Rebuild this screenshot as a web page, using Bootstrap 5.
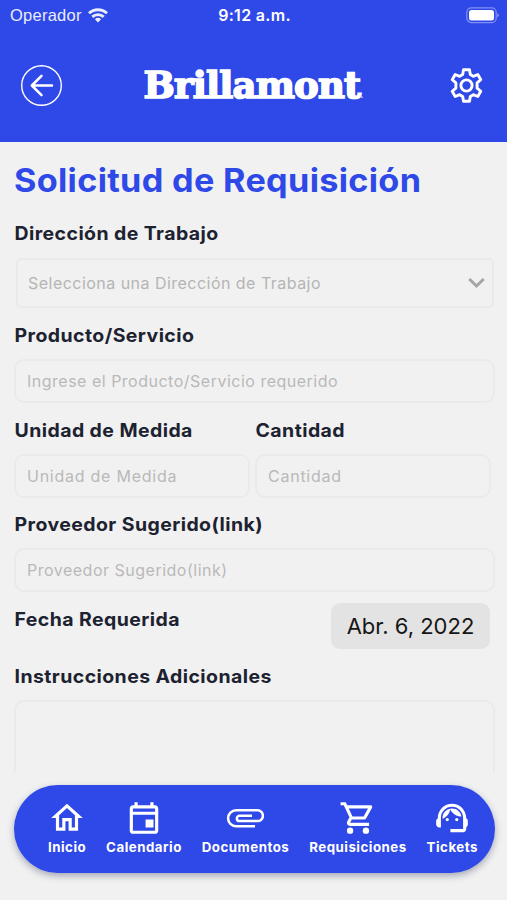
<!DOCTYPE html>
<html lang="es">
<head>
<meta charset="utf-8">
<meta name="viewport" content="width=device-width, initial-scale=1">
<title>Solicitud de Requisición</title>
<link href="https://cdn.jsdelivr.net/npm/bootstrap@5.3.0/dist/css/bootstrap.min.css" rel="stylesheet">
<style>
:root{--brand:#2f48e8}
body{background:#f1f1f1;font-family:Inter,"Open Sans",sans-serif;color:#1d2230}
.screen{height:900px;overflow:hidden}
.app-top{height:142px;background:var(--brand)}
.status{height:30px;padding:0 8px 0 10px;font-size:16px;line-height:30px}
.status>*{flex:1 1 0}
.carrier{font-family:"Liberation Sans",sans-serif;font-size:16.500px;letter-spacing:.25px;opacity:.9}
.clock{font-weight:600;letter-spacing:.3px}
.brand-row{height:110px;padding:0 23px 0 21px}
.brand-name{font:bold 37px/48px "DejaVu Serif",serif;letter-spacing:-.8px;-webkit-text-stroke:1.700px #fff;padding:9px 4px 0 0}
.brand-name small{font-size:9px;letter-spacing:0;-webkit-text-stroke:0;opacity:.7}
.form-area{height:630px;padding:19px 12px 0 14px}
.page-title{font-size:32.5px;line-height:40px;font-weight:700;letter-spacing:.3px;color:var(--brand);margin-bottom:20px;transform:scaleX(1.053);transform-origin:0 0}
.field-label{display:block;font-size:18.5px;line-height:24px;font-weight:700;letter-spacing:.4px;padding-left:.5px;white-space:nowrap;transform:scaleX(1.053);transform-origin:0 0}
.form-area .form-control{background-color:transparent;border:2px solid #eaeaeb;border-radius:10px;height:44px;padding:0 11px;font-size:16px;letter-spacing:.5px;color:#b9b9b9}
.form-area .form-control::placeholder{color:#b9b9b9;opacity:1}
.form-area .half-a .form-control{letter-spacing:.75px}
.pick{height:50px;margin:0 1px 0 2px;border:2px solid #eaeaeb;border-radius:5px;padding:0 7px 0 10px;color:#b5b5b5;font-size:16px;letter-spacing:.47px}
.half-a{width:236px}
.date-chip{width:159px;height:46px;margin-right:5px;border-radius:9px;background:#e3e3e3;color:#161616;font-size:22px}
.form-area textarea.form-control{height:140px;resize:none}
.tabs{height:88px;margin:13px 12px 0 14px;border-radius:44px;background:var(--brand);padding:14px 17px 0 34px;box-shadow:0 3px 7px rgba(40,50,90,.38)}
.tab-item{font-size:13.3px;line-height:20px;font-weight:700;letter-spacing:.5px}
.tab-item svg{height:38px;display:block}
</style>
</head>
<body>
<div class="screen">
<header class="app-top text-white">
  <div class="status d-flex align-items-center">
    <div class="carrier d-flex align-items-center"><span>Operador</span>
      <svg style="margin-left:6px" width="20" height="15" viewBox="0 0 20 15" fill="none" stroke="#fff" stroke-width="2.9"><path d="M1 5.3a13 13 0 0 1 18 0M4.3 8.9a8.3 8.3 0 0 1 11.4 0"/><path d="M10 14.5l-3.1-3.2a4.5 4.5 0 0 1 6.200 0z" fill="#fff" stroke="none"/></svg>
    </div>
    <div class="clock text-center text-nowrap">9:12 a.m.</div>
    <div class="d-flex justify-content-end">
      <svg width="33" height="17" viewBox="0 0 33 17"><rect x=".8" y=".8" width="29.4" height="14.800" rx="4.5" fill="none" stroke="#fff" stroke-opacity=".4" stroke-width="1.2"/><rect x="3" y="3" width="25" height="10.5" rx="2.5" fill="#fff"/><path d="M31.4 6v4.5q1.4-.6 1.4-2.2T31.4 6z" fill="#fff" fill-opacity=".45"/></svg>
    </div>
  </div>
  <div class="brand-row d-flex align-items-center justify-content-between">
    <svg width="41" height="41" viewBox="0 0 41 41" fill="none" stroke="#fff"><circle cx="20.5" cy="20.5" r="19.8" stroke-width="1.4"/><path d="M31 20.500H11M20.5 10.800L10.800 20.500l9.700 9.700" stroke-width="2.5" stroke-linecap="round" stroke-linejoin="round"/></svg>
    <div class="brand-name text-nowrap">Brillamont<small>.</small></div>
    <svg width="35" height="35" viewBox="0 0 35 35" fill="none" stroke="#fff" stroke-width="2.9" stroke-linejoin="round"><path d="M14.500 1.800h6l.800 4.800 3 1.700 4.500-1.800 3 5.200-3.700 3.100v5.400l3.700 3.100-3 5.200-4.500-1.800-3 1.700-.800 4.800h-6l-.800-4.800-3-1.700-4.500 1.800-3-5.200 3.700-3.100v-5.400l-3.700-3.100 3-5.200 4.500 1.800 3-1.700z"/><circle cx="17.5" cy="17.5" r="5.600"/></svg>
  </div>
</header>
<main class="form-area overflow-hidden">
  <h1 class="page-title text-nowrap">Solicitud de Requisición</h1>
  <span class="field-label">Dirección de Trabajo</span>
  <div class="pick d-flex align-items-center justify-content-between" style="margin-top:13px"><span>Selecciona una Dirección de Trabajo</span>
    <svg width="17" height="12" viewBox="0 0 17 12" fill="none" stroke="#a5a5a5" stroke-width="3"><path d="M1.3 2l7.2 7 7.2-7"/></svg></div>
  <label class="field-label" for="prod" style="margin:15px 0 12px">Producto/Servicio</label>
  <input id="prod" class="form-control" placeholder="Ingrese el Producto/Servicio requerido">
  <div class="d-flex" style="margin-top:15px;gap:5px">
    <div class="half-a"><label class="field-label" for="um" style="margin-bottom:12px">Unidad de Medida</label><input id="um" class="form-control" placeholder="Unidad de Medida"></div>
    <div class="half-a"><label class="field-label" for="cant" style="margin-bottom:12px">Cantidad</label><input id="cant" class="form-control" placeholder="Cantidad"></div>
  </div>
  <label class="field-label" for="prov" style="margin:14px 0 12px">Proveedor Sugerido(link)</label>
  <input id="prov" class="form-control" placeholder="Proveedor Sugerido(link)">
  <div class="d-flex justify-content-between" style="margin-top:11px">
    <span class="field-label pt-1">Fecha Requerida</span>
    <div class="date-chip d-flex align-items-center justify-content-center">Abr. 6, 2022</div>
  </div>
  <label class="field-label" for="inst" style="margin:15px 0 12px">Instrucciones Adicionales</label>
  <textarea id="inst" class="form-control"></textarea>
</main>
<nav class="tabs d-flex justify-content-between text-white">
  <div class="tab-item d-flex flex-column align-items-center"><svg width="38" viewBox="0 0 24 24" fill="#fff"><path d="M12 5.690l5 4.500V18h-2v-6H9v6H7v-7.810l5-4.500M12 3L2 12h3v8h6v-6h2v6h6v-8h3L12 3z"/></svg><span>Inicio</span></div>
  <div class="tab-item d-flex flex-column align-items-center"><svg width="40" viewBox="0 0 24 24" fill="#fff"><path d="M19 4h-1V2h-2v2H8V2H6v2H5c-1.110 0-2 .9-2 2v14c0 1.100.890 2 2 2h14c1.100 0 2-.9 2-2V6c0-1.100-.9-2-2-2zm0 16H5V10h14v10zm0-12H5V6h14v2zm-6 5h5v5h-5z"/></svg><span>Calendario</span></div>
  <div class="tab-item d-flex flex-column align-items-center"><svg width="38" viewBox="0 0 38 38" fill="none" stroke="#fff" stroke-width="2.500"><path transform="translate(.5 10)" d="M28.500 17.300H9.600a8 8 0 0 1 0-16H31a5.400 5.400 0 0 1 0 10.800H13a2.600 2.600 0 0 1 0-5.300H25.500"/></svg><span>Documentos</span></div>
  <div class="tab-item d-flex flex-column align-items-center"><svg width="40" viewBox="0 0 24 24" fill="#fff"><path d="M15.550 13c.750 0 1.410-.410 1.750-1.030l3.580-6.490A.996.996 0 0 0 20.010 4H5.210l-.940-2H1v2h2l3.600 7.590-1.350 2.440C4.520 15.370 5.480 17 7 17h12v-2H7l1.100-2h7.450zM6.160 6h12.150l-2.760 5H8.530L6.160 6z"/><circle cx="7" cy="20" r="2"/><circle cx="17" cy="20" r="2"/></svg><span>Requisiciones</span></div>
  <div class="tab-item d-flex flex-column align-items-center"><svg width="40" viewBox="0 0 24 24" fill="#fff"><path d="M21 12.220C21 6.730 16.740 3 12 3c-4.690 0-9 3.650-9 9.280-.6.340-1 .980-1 1.720v2c0 1.100.9 2 2 2h1v-6.100C5 8.030 8.130 4.900 12 4.900s7 3.130 7 7V19h-8v2h8c1.100 0 2-.9 2-2v-1.220c.590-.310 1-.920 1-1.640v-2.300c0-.7-.410-1.310-1-1.620z"/><circle cx="9" cy="13" r="1"/><circle cx="15" cy="13" r="1"/><path d="M18 11.030C17.520 8.180 15.040 6 12.050 6c-3.030 0-6.290 2.510-6.030 6.450 2.470-1.010 4.330-3.210 4.860-5.890 1.310 2.630 4 4.440 7.120 4.470z"/></svg><span>Tickets</span></div>
</nav>
</div>
<script src="https://cdn.jsdelivr.net/npm/bootstrap@5.3.0/dist/js/bootstrap.bundle.min.js"></script>
</body>
</html>
